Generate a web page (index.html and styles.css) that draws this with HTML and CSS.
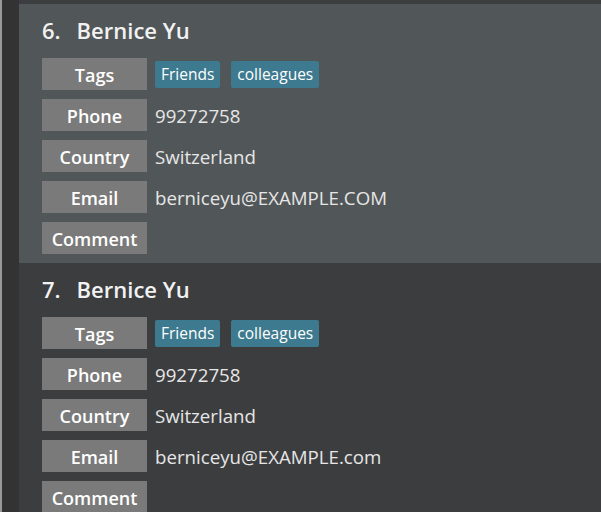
FILE: index.html
```html
<!DOCTYPE html>
<html lang="en">
<head>
<meta charset="utf-8">
<title>Contacts</title>
<link rel="stylesheet" href="styles.css">
</head>
<body>
<div class="app">
  <div class="edge"></div>
  <div class="gutter"></div>
  <div class="list">
    <div class="card selected">
      <div class="title"><span class="num">6.</span><span class="name">Bernice Yu</span></div>
      <div class="rows">
        <div class="row"><div class="label">Tags</div><div class="chips"><span class="chip">Friends</span><span class="chip">colleagues</span></div></div>
        <div class="row"><div class="label">Phone</div><div class="value">99272758</div></div>
        <div class="row"><div class="label">Country</div><div class="value">Switzerland</div></div>
        <div class="row"><div class="label">Email</div><div class="value">berniceyu@EXAMPLE.COM</div></div>
        <div class="row"><div class="label">Comment</div><div class="value"></div></div>
      </div>
    </div>
    <div class="card">
      <div class="title"><span class="num">7.</span><span class="name">Bernice Yu</span></div>
      <div class="rows">
        <div class="row"><div class="label">Tags</div><div class="chips"><span class="chip">Friends</span><span class="chip">colleagues</span></div></div>
        <div class="row"><div class="label">Phone</div><div class="value">99272758</div></div>
        <div class="row"><div class="label">Country</div><div class="value">Switzerland</div></div>
        <div class="row"><div class="label">Email</div><div class="value">berniceyu@EXAMPLE.com</div></div>
        <div class="row"><div class="label">Comment</div><div class="value"></div></div>
      </div>
    </div>
  </div>
</div>
</body>
</html>
```
FILE: styles.css
```css
html, body {
  margin: 0;
  padding: 0;
  height: 100%;
  overflow: hidden;
  background: #3c3d3f;
}
body {
  font-family: "Open Sans", "Noto Sans", sans-serif;
  color: #eeeeee;
}
.app {
  display: flex;
  height: 512px;
}
.edge {
  width: 2px;
  background: #9a9a9a;
  flex: none;
}
.gutter {
  width: 17px;
  background: #333333;
  flex: none;
}
.list {
  flex: 1;
  padding-top: 4px;
  background: #3c3d3f;
  display: flex;
  flex-direction: column;
}
.card {
  padding: 13px 0 9px 23px;
  background: #3c3d3f;
}
.card.selected {
  background: #515658;
}
.title {
  display: flex;
  gap: 16px;
  font-weight: 600;
  font-size: 22px;
  line-height: 26px;
  color: #f2f2f2;
  margin-bottom: 15px;
}
.rows {
  display: flex;
  flex-direction: column;
  gap: 9px;
}
.row {
  display: flex;
  align-items: center;
  height: 32px;
  gap: 8px;
}
.label {
  box-sizing: border-box;
  width: 105px;
  height: 32px;
  padding-top: 2px;
  flex: none;
  background: #7a7a7a;
  color: #ffffff;
  font-weight: 600;
  font-size: 18px;
  line-height: 30px;
  text-align: center;
}
.value {
  font-size: 18.7px;
  color: #e6e6e6;
}
.chips {
  display: flex;
  gap: 11px;
}
.chip {
  background: #3d7a8f;
  color: #ffffff;
  font-size: 15.5px;
  font-weight: 500;
  height: 27px;
  line-height: 27px;
  padding: 0 6px;
  border-radius: 2px;
}
```
